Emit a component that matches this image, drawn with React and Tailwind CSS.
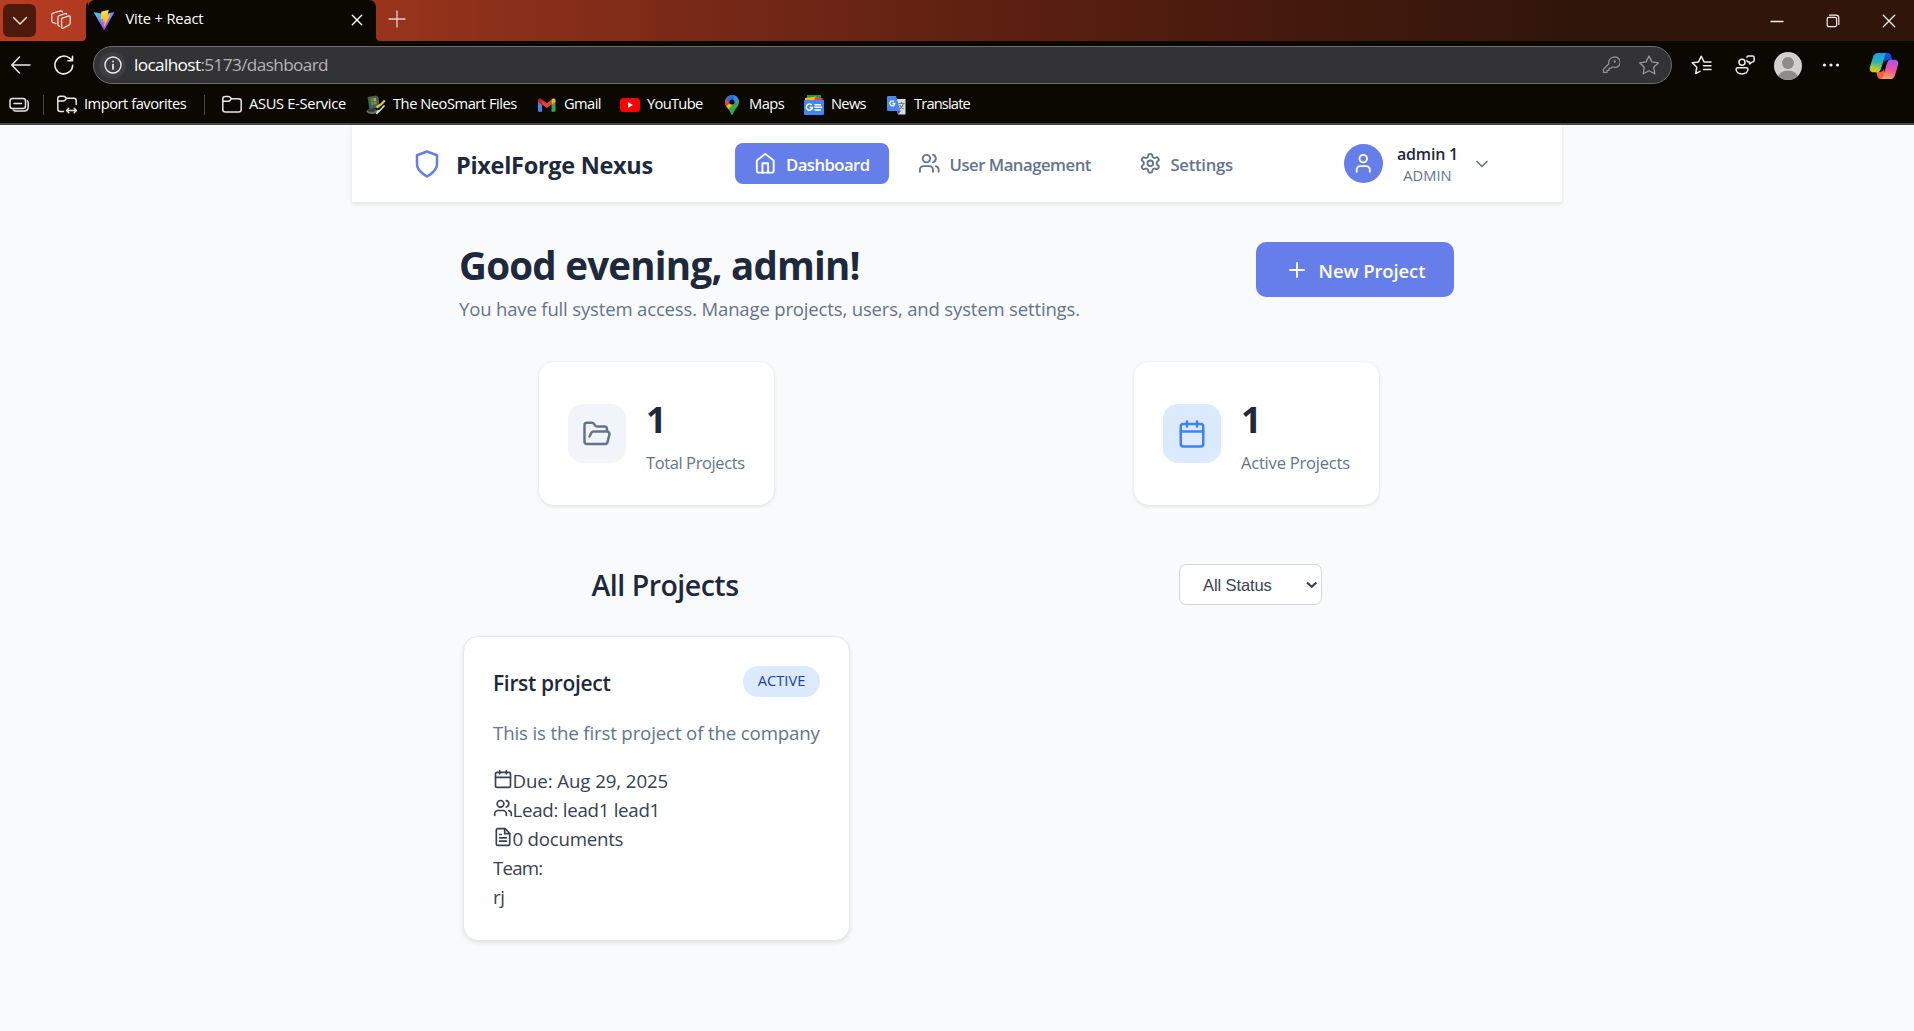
import React from "react";

/* ---------- page icons ---------- */

function Icon({ size = 20, stroke = 2, className = "", children }) {
  return (
    <svg
      width={size}
      height={size}
      viewBox="0 0 24 24"
      fill="none"
      stroke="currentColor"
      strokeWidth={stroke}
      strokeLinecap="round"
      strokeLinejoin="round"
      className={"shrink-0 " + className}
    >
      {children}
    </svg>
  );
}

const Shield = (p) => (
  <Icon {...p}>
    <path d="M12 22s8-4 8-10V5l-8-3-8 3v7c0 6 8 10 8 10" />
  </Icon>
);
const Home = (p) => (
  <Icon {...p}>
    <path d="m3 9 9-7 9 7v11a2 2 0 0 1-2 2H5a2 2 0 0 1-2-2z" />
    <polyline points="9 22 9 12 15 12 15 22" />
  </Icon>
);
const Users = (p) => (
  <Icon {...p}>
    <path d="M16 21v-2a4 4 0 0 0-4-4H6a4 4 0 0 0-4 4v2" />
    <circle cx="9" cy="7" r="4" />
    <path d="M22 21v-2a4 4 0 0 0-3-3.87" />
    <path d="M16 3.13a4 4 0 0 1 0 7.75" />
  </Icon>
);
const User = (p) => (
  <Icon {...p}>
    <path d="M19 21v-2a4 4 0 0 0-4-4H9a4 4 0 0 0-4 4v2" />
    <circle cx="12" cy="7" r="4" />
  </Icon>
);
const Settings = (p) => (
  <Icon {...p}>
    <path d="M12.22 2h-.44a2 2 0 0 0-2 2v.18a2 2 0 0 1-1 1.73l-.43.25a2 2 0 0 1-2 0l-.15-.08a2 2 0 0 0-2.73.73l-.22.38a2 2 0 0 0 .73 2.73l.15.1a2 2 0 0 1 1 1.72v.51a2 2 0 0 1-1 1.74l-.15.09a2 2 0 0 0-.73 2.73l.22.38a2 2 0 0 0 2.73.73l.15-.08a2 2 0 0 1 2 0l.43.25a2 2 0 0 1 1 1.73V20a2 2 0 0 0 2 2h.44a2 2 0 0 0 2-2v-.18a2 2 0 0 1 1-1.73l.43-.25a2 2 0 0 1 2 0l.15.08a2 2 0 0 0 2.73-.73l.22-.39a2 2 0 0 0-.73-2.73l-.15-.08a2 2 0 0 1-1-1.74v-.5a2 2 0 0 1 1-1.74l.15-.09a2 2 0 0 0 .73-2.73l-.22-.38a2 2 0 0 0-2.73-.73l-.15.08a2 2 0 0 1-2 0l-.43-.25a2 2 0 0 1-1-1.73V4a2 2 0 0 0-2-2z" />
    <circle cx="12" cy="12" r="3" />
  </Icon>
);
const ChevronDown = (p) => (
  <Icon {...p}>
    <path d="m6 9 6 6 6-6" />
  </Icon>
);
const Plus = (p) => (
  <Icon {...p}>
    <path d="M5 12h14M12 5v14" />
  </Icon>
);
const FolderOpen = (p) => (
  <Icon {...p}>
    <path d="m6 14 1.45-2.9A2 2 0 0 1 9.24 10H20a2 2 0 0 1 1.94 2.5l-1.55 6a2 2 0 0 1-1.94 1.5H4a2 2 0 0 1-2-2V5c0-1.1.9-2 2-2h3.93a2 2 0 0 1 1.66.9l.82 1.2a2 2 0 0 0 1.66.9H18a2 2 0 0 1 2 2v2" />
  </Icon>
);
const Calendar = (p) => (
  <Icon {...p}>
    <rect x="3" y="4" width="18" height="18" rx="2" />
    <path d="M16 2v4M8 2v4M3 10h18" />
  </Icon>
);
const FileText = (p) => (
  <Icon {...p}>
    <path d="M14.5 2H6a2 2 0 0 0-2 2v16a2 2 0 0 0 2 2h12a2 2 0 0 0 2-2V7.5L14.5 2z" />
    <polyline points="14 2 14 8 20 8" />
    <path d="M16 13H8M16 17H8M10 9H8" />
  </Icon>
);

/* ---------- browser icons ---------- */

function Glyph({ w = 20, h = 20, sw = 1.4, className = "", children }) {
  return (
    <svg
      width={w}
      height={h}
      viewBox={`0 0 ${w} ${h}`}
      fill="none"
      stroke="currentColor"
      strokeWidth={sw}
      strokeLinecap="round"
      strokeLinejoin="round"
      className={"shrink-0 " + className}
    >
      {children}
    </svg>
  );
}

const ViteLogo = () => (
  <svg width="20" height="20" viewBox="0 0 32 32" className="shrink-0">
    <defs>
      <linearGradient id="viteA" x1="0" y1="0" x2="0.6" y2="1">
        <stop offset="0" stopColor="#41d1ff" />
        <stop offset="1" stopColor="#bd34fe" />
      </linearGradient>
      <linearGradient id="viteB" x1="0.4" y1="0" x2="0.6" y2="1">
        <stop offset="0" stopColor="#ffea83" />
        <stop offset="0.1" stopColor="#ffdd35" />
        <stop offset="1" stopColor="#ffa800" />
      </linearGradient>
    </defs>
    <path fill="url(#viteA)" d="M31.9 4.7 17 31.3a.8.8 0 0 1-1.4 0L.1 4.7a.8.8 0 0 1 .8-1.2L16 6.2l15.1-2.7a.8.8 0 0 1 .8 1.2z" />
    <path fill="url(#viteB)" d="M23.2.1 12 2.3a.4.4 0 0 0-.3.4L11 14.3a.4.4 0 0 0 .5.4l3.1-.7a.4.4 0 0 1 .5.5l-.9 4.5a.4.4 0 0 0 .5.5l1.9-.6a.4.4 0 0 1 .5.5l-1.5 7.1c-.1.4.5.7.8.3l.2-.2 9.1-18.2a.4.4 0 0 0-.5-.6l-3.2.6a.4.4 0 0 1-.5-.5l2.1-7.2a.4.4 0 0 0-.4-.6z" />
  </svg>
);

const Workspaces = () => (
  <Glyph w={20} h={20} sw={1.3} className="text-[#f3dcd6]">
    <path d="M10.6 8.3 17.9 5.9a1 1 0 0 1 1.3 1v6.2c0 .9-.5 1.6-1.3 2l-5.8 3.1a1 1 0 0 1-1.5-.9V9.6c0-.6 0-1 .5-1.3z" />
    <path d="M8.6 16.4 6.9 15.3V7.4c0-.8.4-1.4 1.2-1.7l7-2.4.6.9" />
    <path d="M5 13.6 1.6 12.3a1.3 1.3 0 0 1-.8-1.2V4.9c0-.8.5-1.5 1.2-1.7L9.6.8l1.3.4.5.7" />
  </Glyph>
);

const Folder = ({ arrows }) => (
  <Glyph w={20} h={20} sw={1.5} className="text-[#e6e6e6]">
    {arrows ? (
      <>
        <path d="M6.5 16.5H3.2A2.4 2.4 0 0 1 .8 14.1V3.6A2.4 2.4 0 0 1 3.2 1.2h3.2c.7 0 1.2.2 1.7.7l1.4 1.4h7.3a2.4 2.4 0 0 1 2.4 2.4V9.5" />
        <path d="M.8 5.9h5.4c.7 0 1.2-.2 1.7-.7l1.6-1.9" />
        <path d="M9.8 15.5h9.4M11.8 13.3l-2.2 2.2 2.2 2.2M17.2 13.3l2.2 2.2-2.2 2.2" />
      </>
    ) : (
      <>
        <path d="M.8 4A2.4 2.4 0 0 1 3.2 1.6h3.2c.7 0 1.2.2 1.7.7l1.4 1.4h7.3a2.4 2.4 0 0 1 2.4 2.4v8.4a2.4 2.4 0 0 1-2.4 2.4H3.2a2.4 2.4 0 0 1-2.4-2.4z" />
        <path d="M.8 6.3h5.4c.7 0 1.2-.2 1.7-.7l1.6-1.9" />
      </>
    )}
  </Glyph>
);

const NeoSmart = () => (
  <svg width="20" height="20" viewBox="0 0 20 20" className="shrink-0">
    <path d="M1.5 2 10 .5l2.5 1.500 1 10.500L3.500 14z" fill="#4f5a55" />
    <path d="M2.500 3 10 1.800l1 9.500-7 1.200z" fill="#1f7a3d" />
    <path d="M4.500 3.500 7 3v3l-2.200.4z" fill="#e34a2a" />
    <path d="M7.300 3.300 10 3l.3 3-2.800.2z" fill="#7cc24a" />
    <path d="M5 7l2.300-.3.200 3-2.300.4z" fill="#3d8be0" />
    <path d="M7.700 6.700l2.600-.2.300 2.800-2.700.3z" fill="#e8642c" />
    <ellipse cx="6" cy="16.3" rx="5.3" ry="2.7" fill="#6b6d70" />
    <ellipse cx="5.5" cy="15.3" rx="3.8" ry="1.5" fill="#35373a" />
    <path d="M18.800 5.500 15 9.500l-4.500 3" stroke="#e3cf2c" strokeWidth="2.2" fill="none" />
    <path d="M18.500 10.500 12 17.500M12.500 15l-2 4" stroke="#d9dadb" strokeWidth="1.7" fill="none" />
  </svg>
);

const GmailLogo = () => (
  <svg width="20" height="20" viewBox="0 0 20 20" className="shrink-0">
    <path fill="#4285f4" d="M1 6.500 5 9.500v7.300H2.200A1.200 1.200 0 0 1 1 15.600z" />
    <path fill="#34a853" d="M18.500 6.500l-4 3v7.300h2.800a1.200 1.200 0 0 0 1.200-1.200z" />
    <path fill="#ea4335" d="M5 9.500V4.600l4.750 3.600 4.750-3.600v4.900l-4.750 3.600z" />
    <path fill="#c5221f" d="M1 5v1.700l4 3V4.600l-.7-.6C2.900 3 1 3.700 1 5z" />
    <path fill="#fbbc04" d="M18.500 5v1.700l-4 3V4.600l.7-.6c1.400-1 3.300-.3 3.300 1z" />
  </svg>
);

const YouTubeLogo = () => (
  <svg width="20" height="20" viewBox="0 0 20 20" className="shrink-0">
    <rect x="0" y="3" width="20" height="14" rx="3.5" fill="#ff0000" />
    <path d="M8 7.200v5.600l5-2.800z" fill="#fff" />
  </svg>
);

const MapsLogo = () => (
  <svg width="20" height="20" viewBox="0 0 20 20" className="shrink-0">
    <defs>
      <clipPath id="pin">
        <path d="M10 0a7 7 0 0 1 7 7c0 3-1.600 4.800-3.300 6.900-1.300 1.600-2.200 3-2.700 5.200-.3 1-1.700 1-2 0-.5-2.200-1.400-3.600-2.700-5.200C4.600 11.800 3 10 3 7a7 7 0 0 1 7-7z" />
      </clipPath>
    </defs>
    <g clipPath="url(#pin)">
      <rect width="20" height="20" fill="#34a853" />
      <path d="M0 13 10 1 14 6 4 17z" fill="#fbbc04" />
      <path d="M0 10V0h6l4 6-6.500 6z" fill="#ea4335" />
      <path d="M4.600 2.500 10-1l5 2-7.500 8.500z" fill="#1a73e8" />
      <path d="M12 0h6v5L12 8z" fill="#4285f4" />
    </g>
    <circle cx="10" cy="7" r="2.6" fill="#0a0800" />
  </svg>
);

const NewsLogo = () => (
  <svg width="20" height="20" viewBox="0 0 20 20" className="shrink-0">
    <path d="M3 0h14v6H3z" fill="#0c9d58" />
    <path d="M1 3 12 1.500l2 6H1z" fill="#fbbc04" />
    <path d="M11 2.200l7.500.8V7H10z" fill="#ea4335" />
    <rect x="0" y="5" width="20" height="15" rx="1" fill="#4285f4" />
    <path d="M7.600 9.900a3.100 3.100 0 1 0 .9 2.500H5.700" stroke="#fff" strokeWidth="1.5" fill="none" />
    <path d="M10.500 9.700h6.500M10.500 12.300h7.500M10.500 14.900h6.500" stroke="#fff" strokeWidth="1.5" />
  </svg>
);

const TranslateLogo = () => (
  <svg width="20" height="20" viewBox="0 0 20 20" className="shrink-0">
    <path d="M8 4h10.500v15.500H11z" fill="#dcdcdc" />
    <path d="M11.500 8.500h6M14.500 7v1.500M16.500 8.500c-.5 2.500-2.500 4.500-4 5.500M12.700 10c.8 2 2.500 3.500 4 4" stroke="#6f7f88" strokeWidth="1.2" fill="none" />
    <path d="M10 16h4l-3 3.500z" fill="#3b5bd0" />
    <path d="M1 1h8l4.500 15H1a1 1 0 0 1-1-1V2a1 1 0 0 1 1-1z" fill="#4a86ee" />
    <path d="M7 6.500a2.500 2.500 0 1 0 .8 2H5.500" stroke="#fff" strokeWidth="1.3" fill="none" />
  </svg>
);

const Copilot = () => (
  <svg width="30" height="28" viewBox="0 0 30 28" className="shrink-0">
    <defs>
      <linearGradient id="cpA" x1="0.4" y1="0" x2="0.2" y2="1">
        <stop offset="0" stopColor="#1aa0ee" />
        <stop offset="0.45" stopColor="#2bb5b0" />
        <stop offset="0.75" stopColor="#9ccb3c" />
        <stop offset="1" stopColor="#f6c500" />
      </linearGradient>
      <linearGradient id="cpB" x1="0.6" y1="0" x2="0.4" y2="1">
        <stop offset="0" stopColor="#a855f0" />
        <stop offset="0.5" stopColor="#f0509a" />
        <stop offset="1" stopColor="#ffa45c" />
      </linearGradient>
    </defs>
    <path d="M13 1h6c1.600 0 2.600 1 3 2.400l1.200 4.400h-3.700c-2 0-3.300.8-4 3z" fill="#1552d8" />
    <path d="M16.500 27h-5c-1.600 0-2.600-1-3-2.400L7.200 20h3.500c2 0 3.200-.8 3.800-3z" fill="#f2603c" />
    <path d="M9 1h10c-2 0-2.700 1.500-3.300 3.500L12 16.800c-.7 2.300-1.700 3.400-3.700 3.400H5c-3.200 0-5-1.700-4-5.500L4.200 4.600C4.900 2.200 6.600 1 9 1z" fill="url(#cpA)" />
    <path d="M21 27H11c2 0 2.700-1.500 3.300-3.500L18 11.200c.7-2.300 1.700-3.400 3.700-3.400H25c3.200 0 5 1.700 4 5.500l-3.200 10.100C25.100 25.800 23.400 27 21 27z" fill="url(#cpB)" />
  </svg>
);

/* ---------- browser chrome ---------- */

function TabStrip() {
  return (
    <div className="flex h-[41px] items-start bg-[linear-gradient(90deg,#b73c23_0px,#9a341c_370px,#8d301a_480px,#752817_740px,#5c2010_1000px,#44190d_1300px,#2f150a_1600px,#2f150a_1914px)]">
      <div className="mt-1 ml-[3px] flex h-[33px] w-[33px] items-center justify-center rounded-[6px] bg-[#4d1a0e] text-[#f3dcd6]">
        <Glyph w={16} h={10} sw={1.5} className="mt-[1px] ml-[1px]">
          <path d="m1.500 1.500 6.500 6.500 6.500-6.500" />
        </Glyph>
      </div>
      <div className="mt-[10px] ml-[15px]">
        <Workspaces />
      </div>
      <svg width="7" height="41" viewBox="0 0 7 41" className="ml-[10px] shrink-0">
        <path d="M7 35v6H0c4.500 0 5-2 5-6z" fill="#0a0800" />
        <path d="M5 41V5l2-3v39z" fill="#0a0800" />
      </svg>
      <div className="flex h-[41px] w-[288px] items-center rounded-t-[7px] bg-[#0a0800] pb-1 text-white">
        <div className="mt-[2px] ml-[6px]">
          <ViteLogo />
        </div>
        <span className="mt-[-1px] ml-[11.5px] w-[228.5px] whitespace-nowrap text-[14.7px] tracking-[-0.15px]">Vite + React</span>
        <Glyph w={12} h={12} sw={1.4} className="mt-[3px] ml-[-3px]">
          <path d="m1.300 1.300 9.400 9.400M10.700 1.300l-9.400 9.400" />
        </Glyph>
      </div>
      <svg width="6" height="41" viewBox="0 0 6 41" className="ml-[-1px] shrink-0">
        <path d="M0 6h1v29c0 4 .8 6 5 6H0z" fill="#0a0800" />
      </svg>
      <Glyph w={18} h={18} sw={1.3} className="mt-[9.5px] ml-[7px] text-[#e8d0ca]">
        <path d="M9 1v16M1 9h16" />
      </Glyph>
      <div className="ml-auto flex h-[42px] items-center text-[#f5f0ee]">
        <Glyph w={14} h={14} sw={1.3} className="mr-[42px]">
          <path d="M1 7.500h12" />
        </Glyph>
        <Glyph w={14} h={14} sw={1.2} className="mr-[42px]">
          <rect x="1.2" y="3.3" width="9.4" height="9.4" rx="1.6" />
          <path d="M3.600 1.200h6.400a2.800 2.800 0 0 1 2.800 2.800v6.400" />
        </Glyph>
        <Glyph w={14} h={14} sw={1.3} className="mr-[18px]">
          <path d="m1.300 1.300 11.400 11.400M12.700 1.300 1.300 12.700" />
        </Glyph>
      </div>
    </div>
  );
}

function Toolbar() {
  return (
    <div className="flex h-[48px] items-center text-[#ececec]">
      <Glyph w={22} h={20} sw={1.5} className="ml-[9.5px]">
        <path d="M20 10H2M9.500 2 1.800 10l7.700 8" />
      </Glyph>
      <Glyph w={20} h={20} sw={1.6} className="ml-[22px]">
        <path d="M18.700 10.200A8.900 8.900 0 1 1 14.800 2.600l3.400 2.500M18.500 1.200v4.500h-4.600" />
      </Glyph>
      <div className="ml-[19.5px] flex h-[38px] w-[1579px] items-center rounded-full border border-[#6c6d70] bg-[#333335]">
        <div className="ml-[5px] flex h-[27px] w-[27px] items-center justify-center rounded-full bg-[#3e3e40]">
          <Glyph w={18} h={18} sw={1.4}>
            <circle cx="9" cy="9" r="8" />
            <path d="M9 8.500V13M9 5.300v.3" strokeWidth="1.7" />
          </Glyph>
        </div>
        <span className="ml-[8px] whitespace-nowrap text-[17.2px] leading-[24px] tracking-[-0.62px] text-white">
          localhost<span className="text-[#b4b4b5]">:5173/dashboard</span>
        </span>
        <Glyph w={18} h={18} sw={1.3} className="ml-auto text-[#8f8f92]">
          <path d="M11.600 1.200a5.200 5.200 0 1 1-1.200 9.600L8.800 12.400H7v2H5v2H1.400v-3.200l5.500-5.500a5.200 5.200 0 0 1 4.700-6.500z" />
          <circle cx="12.7" cy="5.4" r=".6" fill="currentColor" />
        </Glyph>
        <Glyph w={22} h={20} sw={1.3} className="mr-[11px] ml-[18px] text-[#97979a]">
          <path d="m11 1 2.900 5.900 6.500.9-4.700 4.500 1.100 6.500L11 15.700l-5.800 3.100 1.100-6.500L1.600 7.800l6.500-.9z" />
        </Glyph>
      </div>
      <Glyph w={22} h={20} sw={1.5} className="ml-[18.5px]">
        <path d="M13 6.900 10.300 1.200 7.500 6.900l-6.300.9 4.600 4.400-1.100 6.300 4.300-2.200M13 7h7M12.500 10.800H20M12.500 14.600H20" />
      </Glyph>
      <Glyph w={20} h={20} sw={1.5} className="ml-[22px]">
        <circle cx="7" cy="7.3" r="3" />
        <path d="M2.700 12.800h8.600c1 0 1.600.6 1.600 1.500 0 2.600-2.300 4.600-5.900 4.600s-5.900-2-5.900-4.600c0-.9.6-1.500 1.600-1.500zM12 2.300c0-.9.5-1.400 1.400-1.400h4.300c.9 0 1.400.5 1.400 1.400v3.300c0 .9-.5 1.400-1.400 1.400h-.5l-2.600 2V7h-1.200c-.9 0-1.400-.5-1.400-1.400" />
      </Glyph>
      <svg width="28" height="28" viewBox="0 0 28 28" className="mt-[2px] ml-[19.5px] shrink-0">
        <clipPath id="av">
          <circle cx="14" cy="14" r="14" />
        </clipPath>
        <g clipPath="url(#av)">
          <rect width="28" height="28" fill="#d2d0ce" />
          <circle cx="14" cy="11" r="6" fill="#8f8c88" />
          <ellipse cx="14" cy="26" rx="10" ry="7.5" fill="#8f8c88" />
        </g>
      </svg>
      <svg width="18" height="4" viewBox="0 0 18 4" className="ml-[20px] shrink-0">
        <circle cx="2.5" cy="2" r="1.6" fill="#f0f0f0" />
        <circle cx="9" cy="2" r="1.6" fill="#f0f0f0" />
        <circle cx="15.5" cy="2" r="1.6" fill="#f0f0f0" />
      </svg>
      <div className="mt-[2px] ml-[29px]">
        <Copilot />
      </div>
    </div>
  );
}

function Bookmark({ icon, label, className }) {
  return (
    <div className={"flex shrink-0 items-center gap-[7px] " + className}>
      {icon}
      <span className="mt-[-3px] whitespace-nowrap text-[14.7px]">{label}</span>
    </div>
  );
}

function BookmarksBar() {
  return (
    <div className="flex h-[34px] items-center pb-[3px] text-white">
      <Glyph w={20} h={16} sw={1.5} className="ml-[9px] text-[#e6e6e6]">
        <rect x="1" y="1.5" width="15.5" height="10" rx="2.5" />
        <path d="M5 6.500h7.500M18.300 3.700c.6.600.9 1.300.9 2.200v3.600c0 2.700-1.600 4.500-4.200 4.500H7c-1.200 0-2-.3-2.700-1" />
      </Glyph>
      <div className="ml-[14px] h-[20px] w-px bg-[#464646]" />
      <Bookmark icon={<Folder arrows />} label="Import favorites" className="ml-[13px] w-[147px] gap-[6px] tracking-[-0.48px]" />
      <div className="h-[20px] w-px bg-[#464646]" />
      <Bookmark icon={<Folder />} label="ASUS E-Service" className="ml-[17px] w-[144px] tracking-[-0.33px]" />
      <Bookmark icon={<NeoSmart />} label="The NeoSmart Files" className="w-[171px] tracking-[-0.48px]" />
      <Bookmark icon={<GmailLogo />} label="Gmail" className="w-[83px] tracking-[-0.6px]" />
      <Bookmark icon={<YouTubeLogo />} label="YouTube" className="w-[102px] tracking-[-0.7px]" />
      <Bookmark icon={<MapsLogo />} label="Maps" className="w-[82px] tracking-[-0.5px]" />
      <Bookmark icon={<NewsLogo />} label="News" className="w-[83px] tracking-[-0.7px]" />
      <Bookmark icon={<TranslateLogo />} label="Translate" className="tracking-[-0.85px]" />
    </div>
  );
}

/* ---------- dashboard ---------- */

function Header() {
  return (
    <header className="flex h-[77px] items-center bg-white text-[#64748b] shadow-[0_2px_4px_rgba(0,0,0,0.1)]">
      <Shield size={30} className="ml-[59.5px] text-[#667eea]" />
      <span className="mt-[3px] ml-[14.5px] w-[199px] whitespace-nowrap text-[23.5px] leading-[32px] font-bold tracking-[-0.3px] text-[#1e293b]">
        PixelForge Nexus
      </span>
      <nav className="ml-[80px] flex items-center text-[16.7px] font-semibold">
        <a className="flex h-[41px] w-[154px] items-center gap-[9.5px] rounded-[8px] bg-[#667eea] pl-[19px] text-white">
          <Home size={22.5} />
          <span className="mt-[3px] tracking-[-0.55px]">Dashboard</span>
        </a>
        <a className="ml-[10px] flex h-[41px] w-[210px] items-center gap-[9.5px] pl-[18.5px]">
          <Users size={22.5} />
          <span className="mt-[3px] whitespace-nowrap tracking-[-0.48px]">User Management</span>
        </a>
        <a className="ml-[10px] flex h-[41px] w-[125px] items-center gap-[9.5px] pl-[19.5px]">
          <Settings size={22.5} />
          <span className="mt-[3px] tracking-[-0.3px]">Settings</span>
        </a>
      </nav>
      <div className="ml-[99.5px] flex items-center">
        <span className="flex h-[39px] w-[39px] items-center justify-center rounded-full bg-[#667eea] text-white">
          <User size={22.5} />
        </span>
        <span className="ml-[14.5px] flex w-[61px] flex-col items-center pt-[2px]">
          <span className="text-[16px] leading-[21px] font-semibold tracking-[-0.2px] whitespace-nowrap text-[#1e293b]">admin 1</span>
          <span className="text-[14.7px] leading-[20px] font-medium">ADMIN</span>
        </span>
        <ChevronDown size={20} className="ml-[13.5px]" />
      </div>
    </header>
  );
}

function StatCard({ icon, tint, value, label, className }) {
  return (
    <div className={"flex h-[143px] items-center rounded-[15px] bg-white pl-[29px] shadow-[0_1px_4px_rgba(0,0,0,0.12)] " + className}>
      <span className={"flex h-[59px] w-[58px] items-center justify-center rounded-[15px] " + tint}>{icon}</span>
      <span className="ml-[20px] flex flex-col">
        <span className="pt-[1px] text-[36px] leading-[57px] font-bold text-[#1e293b]">{value}</span>
        <span className="text-[16.5px] leading-[29px] whitespace-nowrap text-[#64748b]">{label}</span>
      </span>
    </div>
  );
}

function ProjectCard() {
  return (
    <article className="ml-[4px] flex h-[305px] w-[387px] flex-col rounded-[15px] border border-[#e2e8f0] bg-white px-[29px] pt-[29px] shadow-[0_2px_4px_rgba(0,0,0,0.1)]">
      <div className="flex h-[31px] items-center justify-between">
        <h3 className="mt-[5px] text-[21px] font-semibold tracking-[-0.33px] text-[#1e293b]">First project</h3>
        <span className="flex h-[31px] w-[77px] justify-center rounded-full bg-[#dbeafe] text-[14.7px] leading-[29px] font-medium text-[#1e40af]">
          ACTIVE
        </span>
      </div>
      <p className="mt-[21px] text-[18.7px] leading-[29px] tracking-[-0.16px] whitespace-nowrap text-[#64748b]">
        This is the first project of the company
      </p>
      <div className="mt-[19px] flex flex-col text-[18.7px] leading-[29px] text-[#374151]">
        <span className="flex tracking-[-0.1px]">
          <Calendar size={20} className="mt-[3px] ml-[-0.5px]" />
          Due: Aug 29, 2025
        </span>
        <span className="flex tracking-[-0.27px]">
          <Users size={20} className="mt-[3px] ml-[-0.5px]" />
          Lead: lead1 lead1
        </span>
        <span className="flex tracking-[-0.25px]">
          <FileText size={20} className="mt-[3px] ml-[-0.5px]" />
          0 documents
        </span>
        <span className="tracking-[-0.8px]">Team:</span>
        <span className="tracking-[-0.5px]">rj</span>
      </div>
    </article>
  );
}

function Dashboard() {
  return (
    <main className="flex flex-col pr-[108px] pl-[107px]">
      <section className="flex justify-between pt-[40px]">
        <div>
          <h1 className="text-[38.5px] leading-[46px] font-bold tracking-[-0.75px] text-[#1e293b]">Good evening, admin!</h1>
          <p className="mt-[6px] text-[18.5px] leading-[29px] tracking-[-0.15px] text-[#64748b]">
            You have full system access. Manage projects, users, and system settings.
          </p>
        </div>
        <button className="flex h-[55px] w-[198px] items-center rounded-[10px] bg-[#667eea] pl-[29px] text-[18.5px] font-semibold text-white">
          <Plus size={24} stroke={1.8} />
          <span className="mt-[3px] ml-[9.5px] tracking-[-0.1px] whitespace-nowrap">New Project</span>
        </button>
      </section>

      <section className="mt-[39px] flex">
        <StatCard
          className="ml-[80px] w-[235px] tracking-[-0.4px]"
          tint="bg-[#f1f5f9] text-[#64748b]"
          icon={<FolderOpen size={30} />}
          value="1"
          label="Total Projects"
        />
        <StatCard
          className="ml-[360px] w-[245px] tracking-[-0.2px]"
          tint="bg-[#dbeafe] text-[#3b82f6]"
          icon={<Calendar size={30} />}
          value="1"
          label="Active Projects"
        />
      </section>

      <section className="mt-[59px] flex h-[41px] items-center">
        <h2 className="mt-[2px] ml-[132.5px] w-[587.5px] text-[28.5px] font-semibold tracking-[-0.5px] text-[#1e293b]">All Projects</h2>
        <div className="flex h-[41px] w-[143px] items-center rounded-[7px] border border-[#d1d5db] bg-white pl-[23px] font-['Liberation_Sans',sans-serif] text-[16.5px] text-[#374151]">
          <span className="mt-[2px] w-[99px] tracking-[-0.1px] whitespace-nowrap">All Status</span>
          <svg width="14" height="8" viewBox="0 0 14 8" className="ml-[3px]">
            <path d="m2 1.500 4.700 4.300L11.400 1.500" fill="none" stroke="#374151" strokeWidth="2.2" />
          </svg>
        </div>
      </section>

      <section className="mt-[31px]">
        <ProjectCard />
      </section>
    </main>
  );
}

export default function App() {
  return (
    <div className="flex h-[1031px] w-[1914px] flex-col overflow-hidden bg-[#f9fafc] font-['Open_Sans','Noto_Sans',sans-serif]">
      <div className="flex h-[125px] shrink-0 flex-col border-b-2 border-[#4a4643] bg-[#0a0800]">
        <TabStrip />
        <Toolbar />
        <BookmarksBar />
      </div>
      <div className="ml-[352px] w-[1210px]">
        <Header />
        <Dashboard />
      </div>
    </div>
  );
}
